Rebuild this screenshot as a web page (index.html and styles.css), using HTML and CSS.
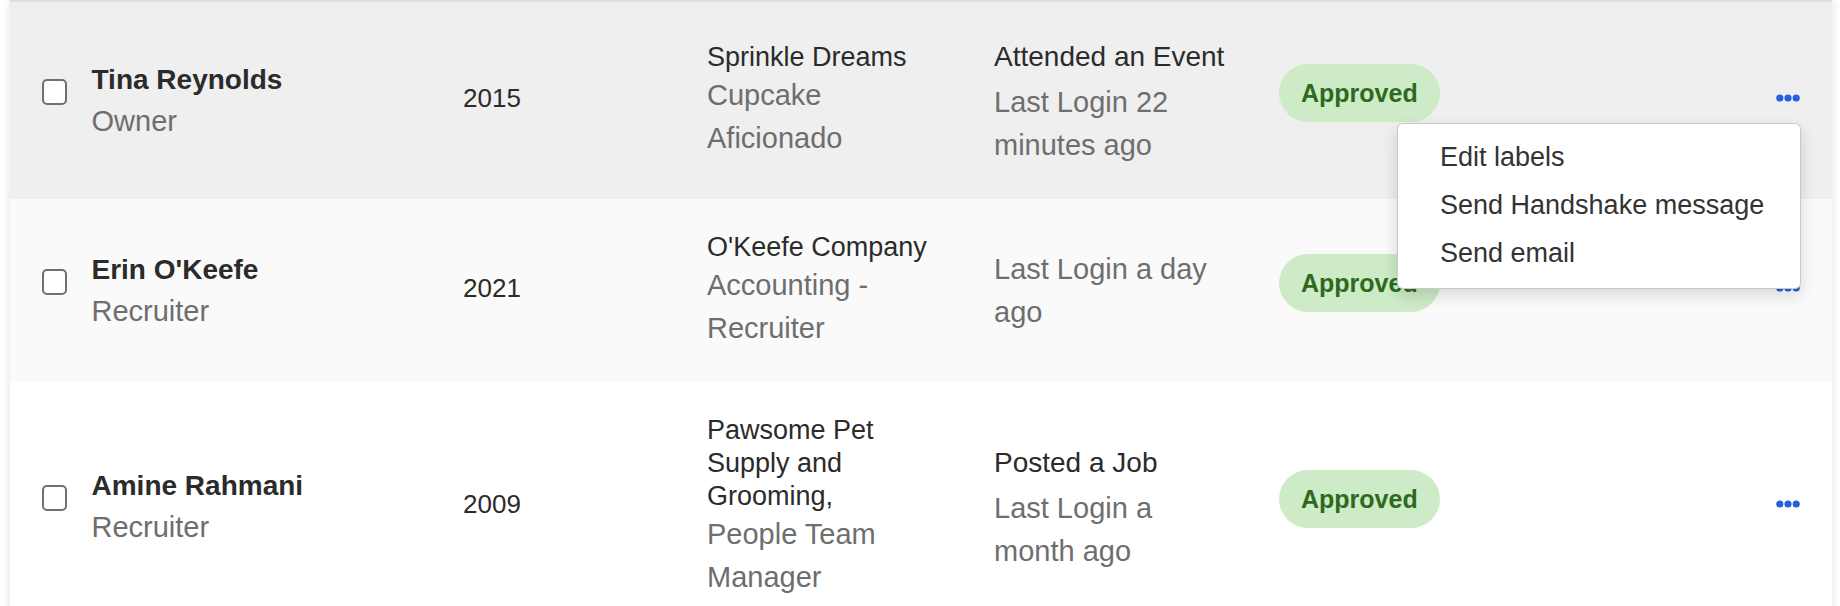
FILE: index.html
```html
<!DOCTYPE html>
<html lang="en">
<head>
    <meta charset="UTF-8">
    <meta name="viewport" content="width=device-width, initial-scale=1.0">
    <title>Employer contacts</title>
    <link rel="stylesheet" href="styles.css">
</head>
<body>
    <div class="contacts">
        <div class="row hover">
            <input type="checkbox" class="check">
            <div class="person">
                <div class="name">Tina Reynolds</div>
                <div class="sub">Owner</div>
            </div>
            <div class="year">2015</div>
            <div class="company">
                <div class="company-name">Sprinkle Dreams</div>
                <div class="sub">Cupcake Aficionado</div>
            </div>
            <div class="activity">
                <div class="activity-title">Attended an Event</div>
                <div class="sub">Last Login 22 minutes ago</div>
            </div>
            <div class="status"><span class="badge">Approved</span></div>
            <div class="more">
                <button class="dots" aria-label="More actions">
                    <svg width="24" height="8" viewBox="0 0 24 8"><circle cx="3.8" cy="4" r="3.6"/><circle cx="12" cy="4" r="3.6"/><circle cx="20.2" cy="4" r="3.6"/></svg>
                </button>
                <div class="menu">
                    <a href="#">Edit labels</a>
                    <a href="#">Send Handshake message</a>
                    <a href="#">Send email</a>
                </div>
            </div>
        </div>

        <div class="row striped">
            <input type="checkbox" class="check">
            <div class="person">
                <div class="name">Erin O'Keefe</div>
                <div class="sub">Recruiter</div>
            </div>
            <div class="year">2021</div>
            <div class="company">
                <div class="company-name">O'Keefe Company</div>
                <div class="sub">Accounting - Recruiter</div>
            </div>
            <div class="activity">
                <div class="sub">Last Login a day ago</div>
            </div>
            <div class="status"><span class="badge">Approved</span></div>
            <div class="more">
                <button class="dots" aria-label="More actions">
                    <svg width="24" height="8" viewBox="0 0 24 8"><circle cx="3.8" cy="4" r="3.6"/><circle cx="12" cy="4" r="3.6"/><circle cx="20.2" cy="4" r="3.6"/></svg>
                </button>
            </div>
        </div>

        <div class="row">
            <input type="checkbox" class="check">
            <div class="person">
                <div class="name">Amine Rahmani</div>
                <div class="sub">Recruiter</div>
            </div>
            <div class="year">2009</div>
            <div class="company">
                <div class="company-name">Pawsome Pet Supply and Grooming,</div>
                <div class="sub">People Team Manager</div>
            </div>
            <div class="activity">
                <div class="activity-title">Posted a Job</div>
                <div class="sub">Last Login a month ago</div>
            </div>
            <div class="status"><span class="badge">Approved</span></div>
            <div class="more">
                <button class="dots" aria-label="More actions">
                    <svg width="24" height="8" viewBox="0 0 24 8"><circle cx="3.8" cy="4" r="3.6"/><circle cx="12" cy="4" r="3.6"/><circle cx="20.2" cy="4" r="3.6"/></svg>
                </button>
            </div>
        </div>
    </div>
</body>
</html>
```

FILE: styles.css
```css
* {
    margin: 0;
    padding: 0;
    box-sizing: border-box;
}
body {
    font-family: "Liberation Sans", Arial, sans-serif;
    background-color: #ffffff;
    color: #2b2b2b;
}
.contacts {
    margin: 0 8px 0 10px;
    border-top: 2px solid #dedede;
    background-color: #ffffff;
    box-shadow: 0 0 9px rgba(0, 0, 0, 0.12);
}
.row {
    display: grid;
    grid-template-columns: 49.5px 371.5px 244px 287px 285px 1fr 24px;
    align-items: center;
    padding: 32px;
    background-color: #ffffff;
}
.row.hover {
    background-color: #efefef;
}
.row.striped {
    background-color: #fafafa;
}
.check {
    appearance: none;
    -webkit-appearance: none;
    width: 25px;
    height: 26px;
    border: 2px solid #707070;
    border-radius: 5px;
    background-color: #ffffff;
    margin-bottom: 17px;
}
.name {
    font-size: 28px;
    line-height: 41px;
    font-weight: bold;
    color: #2b2b2b;
}
.sub {
    font-size: 29px;
    line-height: 43px;
    color: #6e6e6e;
}
.year {
    font-size: 26px;
    color: #2b2b2b;
    margin-bottom: 4px;
}
.company {
    max-width: 240px;
}
.company-name {
    font-size: 27px;
    line-height: 33px;
    color: #2b2b2b;
}
.activity {
    max-width: 238px;
}
.activity-title {
    font-size: 28px;
    line-height: 45px;
    margin-bottom: 2px;
    color: #2b2b2b;
}
.status {
    margin-bottom: 16px;
}
.badge {
    display: inline-block;
    background-color: #cdebc6;
    color: #2d6a20;
    font-size: 25px;
    font-weight: bold;
    line-height: 58px;
    padding: 0 22px;
    border-radius: 29px;
}
.more {
    position: relative;
    margin-bottom: 6px;
}
.dots {
    display: block;
    border: none;
    background: none;
    width: 24px;
    height: 8px;
    cursor: pointer;
}
.dots svg {
    display: block;
    fill: #2660dd;
}
.menu {
    position: absolute;
    top: 29px;
    right: -1px;
    width: 404px;
    padding: 9px 0 11px;
    background-color: #ffffff;
    border: 1px solid #c9c9c9;
    border-radius: 6px;
    box-shadow: 0 6px 16px rgba(0, 0, 0, 0.14);
    z-index: 10;
}
.menu a {
    display: block;
    padding-left: 42px;
    font-size: 27px;
    line-height: 48px;
    color: #333333;
    text-decoration: none;
}
```
